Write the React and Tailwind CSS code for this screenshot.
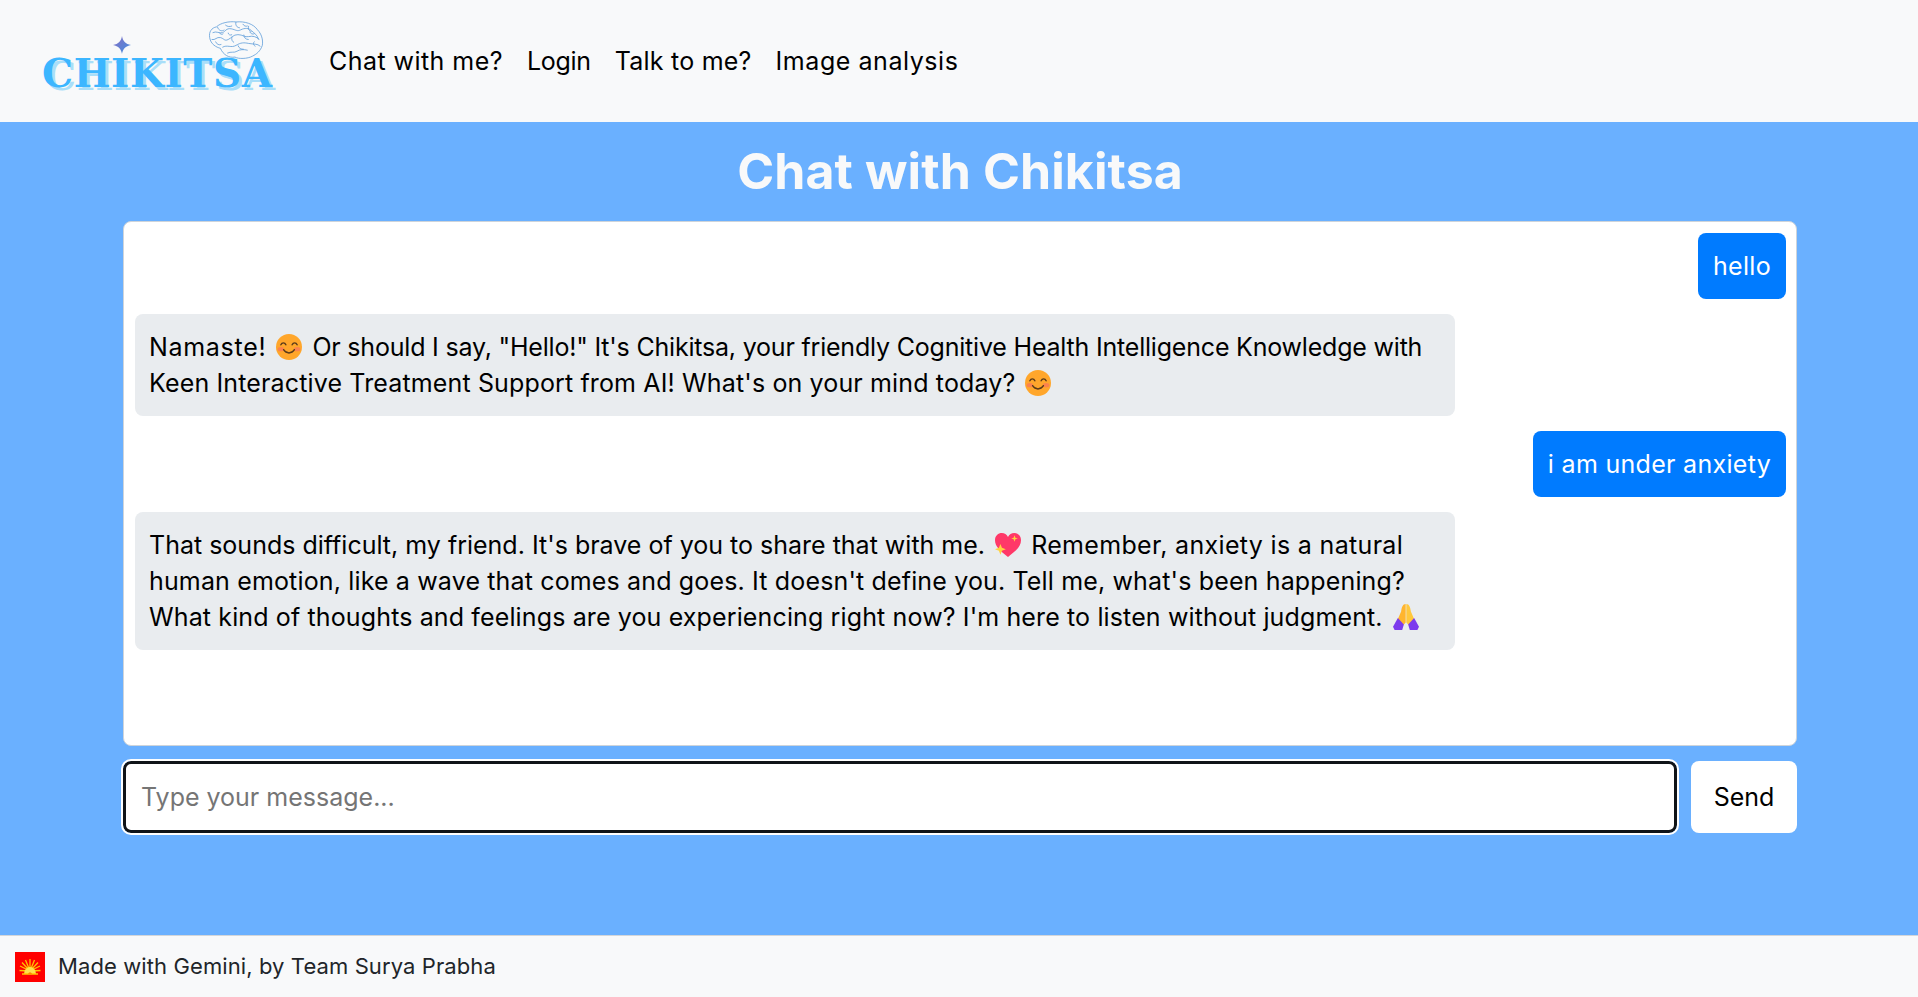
const Smile = () => (
  <svg viewBox="0 0 24 24" className="inline-block w-[26px] h-[26px] align-[-4px] mx-[3px]">
    <circle cx="12" cy="12" r="12" fill="#ffa62b" />
    <ellipse cx="4.500" cy="14" rx="3" ry="2" fill="#f9735b" opacity="0.7" />
    <ellipse cx="19.500" cy="14" rx="3" ry="2" fill="#f9735b" opacity="0.7" />
    <path d="M4.500 10c1-2.400 3.600-2.400 4.600 0M14.900 10c1-2.400 3.600-2.400 4.600 0M7 14.500c2.500 4 7.500 4 10 0" fill="none" stroke="#5b3a1a" strokeWidth="1.300" strokeLinecap="round" />
  </svg>
);
const Heart = () => (
  <svg viewBox="0 0 24 24" className="inline-block w-[26px] h-[26px] align-[-4px] mx-[3px]">
    <path d="M12 23C5 17.500 0 13.500 0 7.500 0 3.500 3 1 6.300 1 8.800 1 10.800 2.300 12 4.500 13.200 2.300 15.200 1 17.700 1 21 1 24 3.500 24 7.500c0 6-5 10-12 15.500z" fill="#ff3868" />
    <path d="M18 3l.8 2.200L21 6l-2.200.8L18 9l-.8-2.200L15 6l2.200-.8z" fill="#ffd23f" />
    <path d="M5 11l1.400 3.600L10 16l-3.600 1.400L5 21l-1.400-3.600L0 16l3.600-1.400z" fill="#ffd23f" />
  </svg>
);
const Pray = () => (
  <svg viewBox="0 0 24 24" className="inline-block w-[26px] h-[26px] align-[-4px] mx-[3px]">
    <path d="M11.700 0C9 0 8 3 7.500 7l-3.500 8 5 5 2.700-3z" fill="#ffb52e" />
    <path d="M12.300 0C15 0 16 3 16.500 7l3.500 8-5 5-2.700-3z" fill="#ffc83d" />
    <path d="M4.500 13 10 19 8.500 24H1.500L0 21z" fill="#7c3aed" />
    <path d="M19.500 13 14 19l1.500 5h7L24 21z" fill="#7c3aed" />
  </svg>
);
const Brain = () => (
  <svg viewBox="0 0 56 40" fill="none" stroke="#5a9ad8" strokeWidth="0.800" className="absolute left-[166px] top-[-32px] w-[56px] h-[39px]">
    <path d="M1 17C0 11 3 7 8 6 12 2 21 0 28 1 37 0 46 3 50 9 54 13 56 19 55 25 53 31 49 34 45 36 40 39 30 39 27 37 21 38 15 35 12 28 8 27 2 24 1 17z" />
    <path d="M4 12c4-2 7 1 10 0s4-5 9-4 6 3 10 1 8-2 11 1 6 4 7 9M3 19c4 1 5-3 9-2s4 4 8 2 5-5 10-5 7 3 11 2 8 0 11 3M14 27c5-3 9 1 14-2s8-3 13-2 9 0 12 3M19 33c4-2 7 0 10-2s7-2 11-1M9 6c1 4 5 5 7 3M28 1c-1 3 1 6 4 6M41 5c-1 3 0 5 3 6M7 21c1 3 4 4 6 3M24 16c-1 3 0 5 2 6M36 14c0 3 2 5 5 5M47 21c-2 2-1 4 1 5M30 25c1 3 3 4 6 4M17 4c2 2 5 2 7 1M35 3c1 2 3 3 5 2M11 12c1 2 3 2 4 1M20 12c0 2 2 3 4 2M42 11c1 2 3 3 5 2" />
  </svg>
);
const Sparkle = () => (
  <svg viewBox="0 0 18 18" className="absolute left-[71px] top-[-17px] w-[18px] h-[18px]">
    <defs>
      <linearGradient id="sp" x1="0" y1="0" x2="1" y2="1">
        <stop offset="0" stopColor="#8a6fc4" />
        <stop offset="1" stopColor="#3d8fe0" />
      </linearGradient>
    </defs>
    <path d="M9 0c.8 5 3.500 8 9 9-5.500 1-8.200 4-9 9-.8-5-3.500-8-9-9 5.500-1 8.200-4 9-9z" fill="url(#sp)" />
  </svg>
);
const Flag = () => (
  <svg viewBox="0 0 30 30" className="w-[30px] h-[30px] shrink-0">
    <rect width="30" height="30" fill="#ff0000" />
    <g stroke="#ffc400" strokeWidth="1.300">
      <path d="M15 19 15 7M15 19 10.500 8M15 19 19.500 8M15 19 7 10.500M15 19 23 10.500M15 19 5 14M15 19 25 14M15 19 4.500 18.500M15 19 25.500 18.500" />
    </g>
    <path d="M9 22a6 7 0 0 1 12 0z" fill="#ffe14d" />
    <path d="M7 22h16" stroke="#ffc400" strokeWidth="1.500" />
    <path d="M13 22a2.200 3 0 0 1 4 0z" fill="#ff8a00" />
  </svg>
);

export default function App() {
  const font = "font-['Inter','Noto_Sans',sans-serif]";
  return (
    <div className={`flex flex-col h-[997px] bg-[#6ab0ff] overflow-hidden ${font}`}>
      <nav className="h-[122px] shrink-0 bg-[#f8f9fa] flex items-center">
        <div className="relative ml-[42px] mt-[23px] w-[232px] h-[40px] shrink-0">
          <Brain />
          <Sparkle />
          <span className="block font-['DejaVu_Serif',serif] font-bold text-[39px] leading-[40px] text-[#3cb6ff] tracking-[0.6px] [text-shadow:3px_3px_0_#a9def9] whitespace-nowrap">CHIKITSA</span>
        </div>
        <div className="flex ml-[55px] gap-[24px] text-[25px] leading-[36px] text-black mt-[-1px]">
          <a className="tracking-[0.45px]">Chat with me?</a>
          <a className="tracking-[-0.3px]">Login</a>
          <a className="tracking-[0.23px]">Talk to me?</a>
          <a className="tracking-[0.55px]">Image analysis</a>
        </div>
      </nav>
      <main className="flex-1 flex flex-col items-center pl-[2px]">
        <h1 className="text-[50px] leading-[58px] font-bold text-[#f8f9fa] mt-[20px] mb-[21px] tracking-[0.1px]">Chat with Chikitsa</h1>
        <div className="w-[1674px] h-[525px] bg-white border border-[#ced4da] rounded-[8px] pl-[11px] pr-[10px] pt-[11px] flex flex-col gap-[15px] text-[25px] leading-[36px] text-black">
          <div className="self-end bg-[#007bff] text-white rounded-[8px] px-[15px] py-[15px] tracking-[0.3px]">hello</div>
          <div className="w-[1320px] bg-[#e9ecef] rounded-[8px] px-[14px] py-[15px]">
            <span className="tracking-[0.7px]">Namaste!</span> <Smile /> <span className="tracking-[-0.2px]">Or should I say, "Hello!" It's Chikitsa, your friendly Cognitive Health Intelligence Knowledge with</span><br />
            <span className="tracking-[0.14px]">Keen Interactive Treatment Support from AI! What's on your mind today?</span> <Smile />
          </div>
          <div className="self-end bg-[#007bff] text-white rounded-[8px] px-[15px] py-[15px] tracking-[0.3px]">i am under anxiety</div>
          <div className="w-[1320px] bg-[#e9ecef] rounded-[8px] px-[14px] py-[15px]">
            <span>That sounds difficult, my friend. It's brave of you to share that with me.</span> <Heart /> <span className="tracking-[0.33px]">Remember, anxiety is a natural</span><br />
            <span className="tracking-[0.15px]">human emotion, like a wave that comes and goes. It doesn't define you. Tell me, what's been happening?</span><br />
            <span className="tracking-[0.13px]">What kind of thoughts and feelings are you experiencing right now? I'm here to listen without judgment.</span> <Pray />
          </div>
        </div>
        <div className="w-[1674px] mt-[15px] flex gap-[14px] items-stretch">
          <input
            placeholder="Type your message..."
            className="flex-1 min-w-0 h-[72px] bg-white border-[3px] border-[#101418] rounded-[8px] outline outline-[2px] outline-white px-[15px] text-[25px] placeholder:text-[#757575]"
          />
          <button className="w-[106px] h-[72px] bg-white rounded-[8px] pt-[1px] text-[25px] text-black">Send</button>
        </div>
      </main>
      <footer className="h-[62px] shrink-0 bg-[#f8f9fa] border-t border-[#d3d6da] flex items-center pl-[15px] gap-[13px] text-[22px] text-[#212529] tracking-[0.1px]">
        <Flag />
        <span>Made with Gemini, by Team Surya Prabha</span>
      </footer>
    </div>
  );
}
